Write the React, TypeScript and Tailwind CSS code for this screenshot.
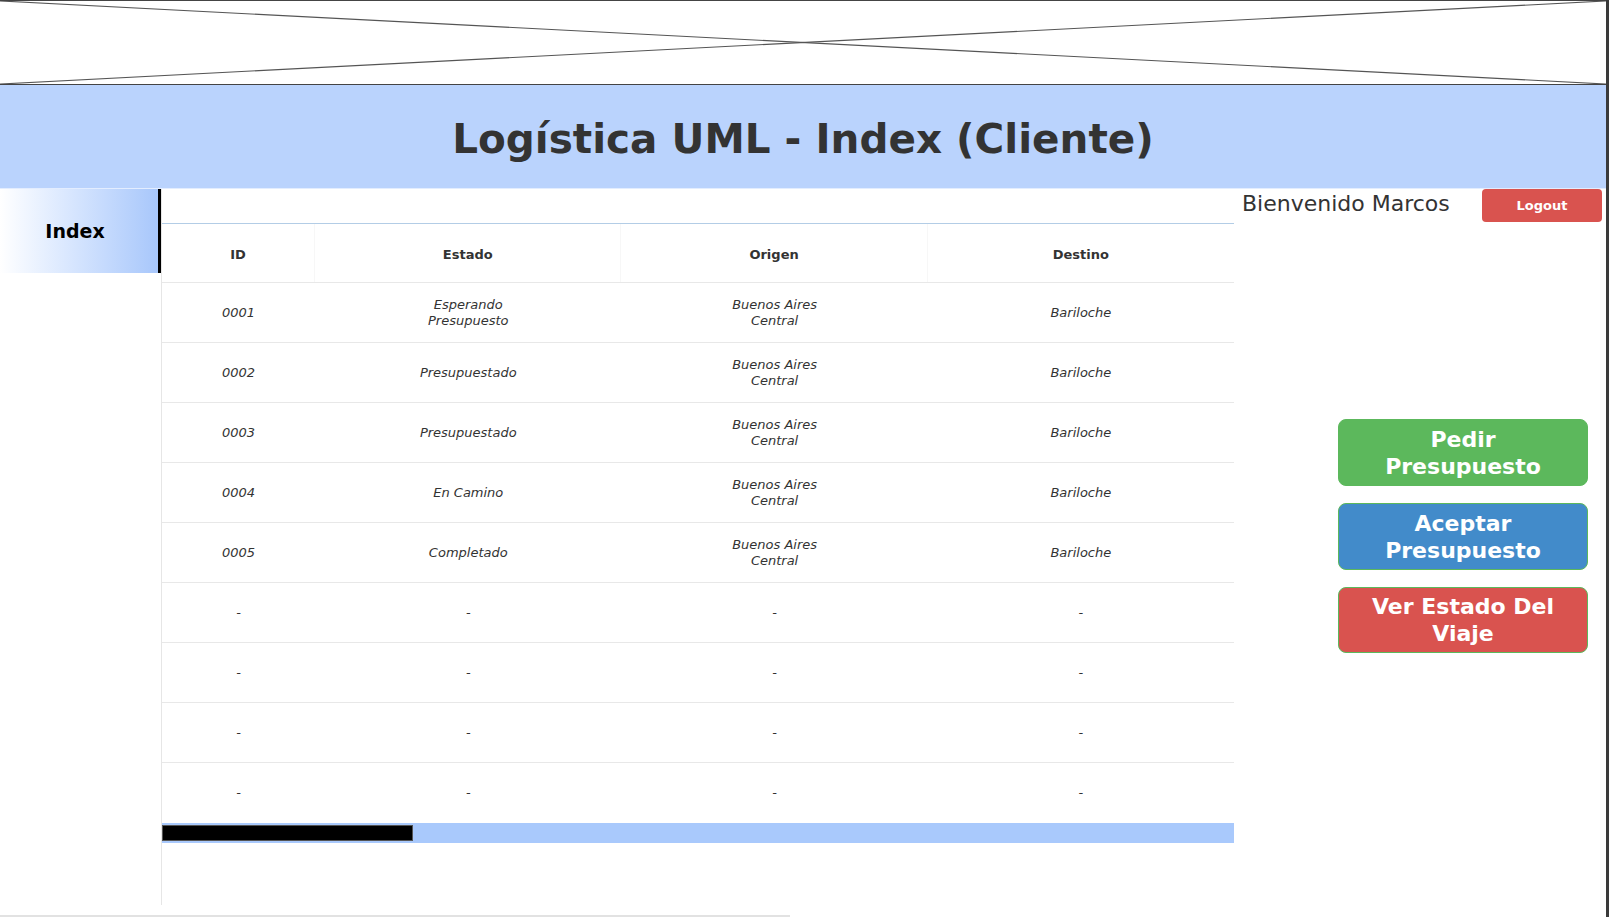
const rows = [
  { id: "0001", estado: "Esperando\nPresupuesto", origen: "Buenos Aires\nCentral", destino: "Bariloche" },
  { id: "0002", estado: "Presupuestado", origen: "Buenos Aires\nCentral", destino: "Bariloche" },
  { id: "0003", estado: "Presupuestado", origen: "Buenos Aires\nCentral", destino: "Bariloche" },
  { id: "0004", estado: "En Camino", origen: "Buenos Aires\nCentral", destino: "Bariloche" },
  { id: "0005", estado: "Completado", origen: "Buenos Aires\nCentral", destino: "Bariloche" },
  { id: "-", estado: "-", origen: "-", destino: "-" },
  { id: "-", estado: "-", origen: "-", destino: "-" },
  { id: "-", estado: "-", origen: "-", destino: "-" },
  { id: "-", estado: "-", origen: "-", destino: "-" },
];

const headers = ["ID", "Estado", "Origen", "Destino"];

const App = () => {
  return (
    <div className="flex w-[1609px] h-[917px] bg-white overflow-hidden font-['DejaVu_Sans',Verdana,sans-serif] text-[#333]">
      <div className="flex flex-col w-[1606px]">
        {/* placeholder image */}
        <div className="h-[85px] border-t border-b border-[#444] bg-white">
          <svg className="block w-full h-full" viewBox="0 0 1606 83" preserveAspectRatio="none">
            <line x1="0" y1="0" x2="1606" y2="83" stroke="#555" strokeWidth="1.2" />
            <line x1="0" y1="83" x2="1606" y2="0" stroke="#555" strokeWidth="1.2" />
          </svg>
        </div>

        {/* title bar */}
        <div className="h-[104px] bg-[#bad3fd] flex items-center justify-center pt-[5px] border-b border-[#e3edff]">
          <h1 className="text-[40.5px] font-bold text-[#333] leading-none">Logística UML - Index (Cliente)</h1>
        </div>

        <div className="flex h-[716px]">
          {/* sidebar */}
          <div className="w-[161px] shrink-0">
            <div className="h-[84px] border-r-[3px] border-black bg-gradient-to-r from-white to-[#a8c7fb] flex items-center justify-center pr-[8px]">
              <span className="text-[19px] font-bold text-black">Index</span>
            </div>
          </div>

          {/* table column */}
          <div className="w-[1073px] shrink-0 border-l border-[#e6e6e6] flex flex-col">
            <div className="h-[34px]" />
            <div className="border-t border-[#b3cde6]">
              <div className="grid grid-cols-[1fr_2fr_2fr_2fr] h-[59px] border-b border-[#e8e8e8]">
                {headers.map((h, i) => (
                  <div
                    key={h}
                    className={`flex items-center justify-center pt-[3px] text-[13px] font-bold ${i < 3 ? "border-r border-[#f7f7f7]" : ""}`}
                  >
                    {h}
                  </div>
                ))}
              </div>
              {rows.map((r, idx) => (
                <div
                  key={idx}
                  className={`grid grid-cols-[1fr_2fr_2fr_2fr] h-[60px] ${idx < rows.length - 1 ? "border-b border-[#e8e8e8]" : ""}`}
                >
                  {[r.id, r.estado, r.origen, r.destino].map((v, i) => (
                    <div
                      key={i}
                      className="flex items-center justify-center text-center text-[13px] italic leading-[16px] whitespace-pre-line"
                    >
                      {v}
                    </div>
                  ))}
                </div>
              ))}
            </div>
            {/* horizontal scroll bar */}
            <div className="h-[20px] bg-[#a9c9fc] flex items-center">
              <div className="w-[251px] h-[16px] bg-black border border-[#555]" />
            </div>
          </div>

          {/* right panel */}
          <div className="flex-1 flex flex-col">
            <div className="flex items-center h-[33px]">
              <span className="ml-[8px] mb-[4px] text-[22px] text-[#333] leading-none">Bienvenido Marcos</span>
              <button className="ml-auto mr-[4px] w-[120px] h-[33px] rounded-[4px] bg-[#d9534f] text-white text-[13px] font-bold">
                Logout
              </button>
            </div>
            <div className="mt-[197px] ml-[104px] flex flex-col gap-[17px] w-[250px]">
              <button className="h-[67px] rounded-[8px] bg-[#5cb85c] border border-[#5cb85c] text-white text-[22px] font-bold leading-[27px]">
                Pedir
                <br />
                Presupuesto
              </button>
              <button className="h-[67px] rounded-[8px] bg-[#428bca] border border-[#5cb85c] text-white text-[22px] font-bold leading-[27px]">
                Aceptar
                <br />
                Presupuesto
              </button>
              <button className="h-[66px] rounded-[8px] bg-[#d9534f] border border-[#5cb85c] text-white text-[22px] font-bold leading-[27px]">
                Ver Estado Del
                <br />
                Viaje
              </button>
            </div>
          </div>
        </div>

        <div className="mt-[10px] h-[2px] w-[790px] bg-[#e2e2e2]" />
      </div>
      <div className="w-[3px] h-full bg-[#3a3a3a]" />
    </div>
  );
};

export default App;
